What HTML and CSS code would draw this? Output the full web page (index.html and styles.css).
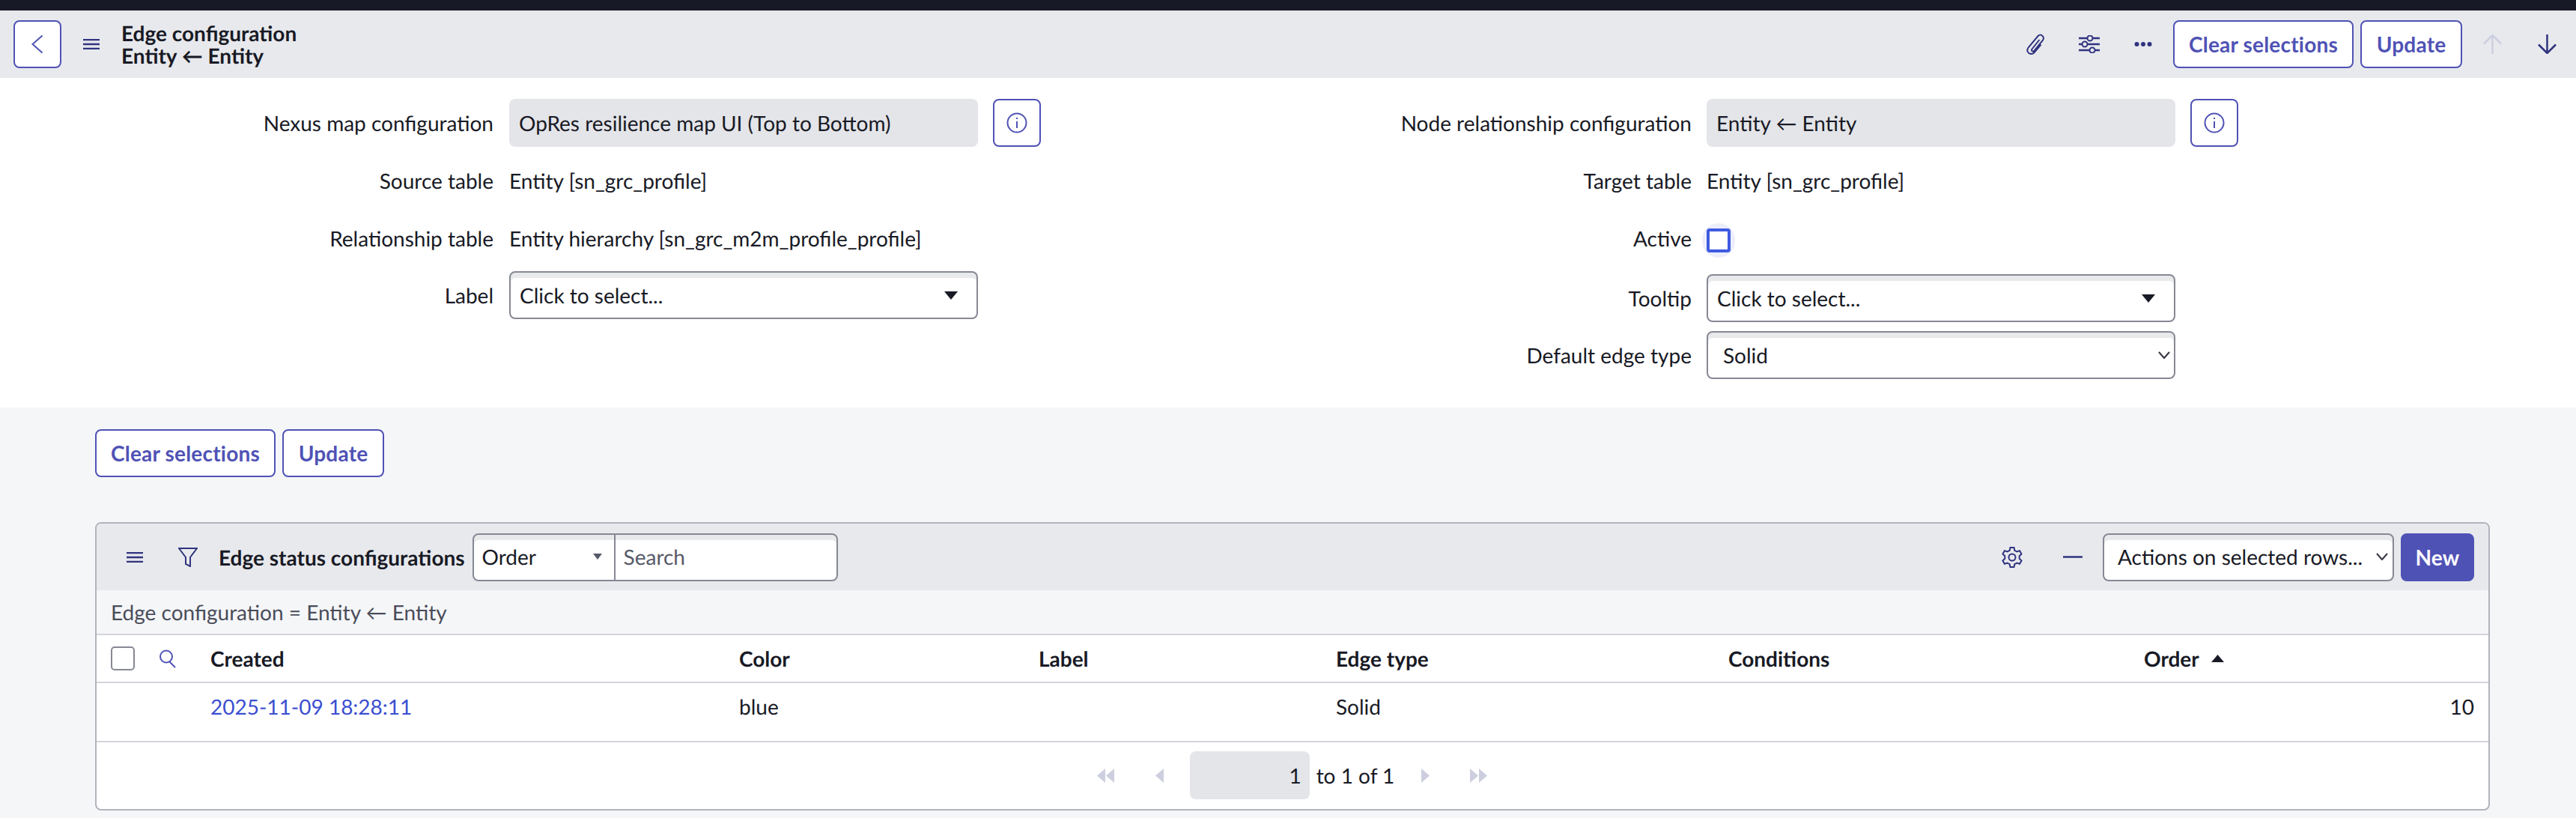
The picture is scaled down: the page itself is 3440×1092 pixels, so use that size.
FILE: index.html
```html
<!DOCTYPE html>
<html lang="en">
<head>
    <meta charset="UTF-8">
    <meta name="viewport" content="width=device-width, initial-scale=1.0">
    <title>Edge configuration</title>
    <link rel="stylesheet" href="styles.css">
</head>
<body>
    <div class="top-bar"></div>

    <header class="form-header">
        <button class="btn btn-back" aria-label="Back">
            <svg width="16" height="26" viewBox="0 0 16 26"><path d="M14.500 1.500 L1.500 13 L14.500 24.500" class="line-primary"/></svg>
        </button>
        <svg class="menu-icon" width="22" height="14" viewBox="0 0 22 14"><path d="M0 1H22M0 7H22M0 13H22" class="line-navy"/></svg>
        <div class="form-title">
            <div>Edge configuration</div>
            <div>Entity ← Entity</div>
        </div>
        <div class="header-actions">
            <svg class="icon-clip" width="26" height="28" viewBox="0 0 26 28"><path d="M18.500 8 L8.500 20.500 C6.800 23 9.800 24.800 11.800 22.500 L22.800 9 C26 4.500 20.800 -0.800 16.800 2.800 L4 18 C-0.800 24.500 6.500 29.500 11.500 25.200 L20.500 14.500" class="line-navy thin"/></svg>
            <svg class="icon-sliders" width="28" height="24" viewBox="0 0 28 24"><path d="M0 4H11M19 4H28M0 12H4M12 12H28M0 20H14M22 20H28" class="line-navy"/><circle cx="15" cy="4" r="3.500" class="line-navy thin"/><circle cx="8" cy="12" r="3.500" class="line-navy thin"/><circle cx="18" cy="20" r="3.500" class="line-navy thin"/></svg>
            <svg class="icon-dots" width="24" height="8" viewBox="0 0 24 8"><circle cx="3.500" cy="4" r="3" class="fill-navy"/><circle cx="12" cy="4" r="3" class="fill-navy"/><circle cx="20.500" cy="4" r="3" class="fill-navy"/></svg>
            <button class="btn btn-clear">Clear selections</button>
            <button class="btn btn-update">Update</button>
            <svg class="icon-up" width="25" height="26" viewBox="0 0 25 26"><path d="M12.500 26V1M1 12.500L12.500 1L24 12.500" class="line-muted"/></svg>
            <svg class="icon-down" width="25" height="26" viewBox="0 0 25 26"><path d="M12.500 0V25M1 13.500L12.500 25L24 13.500" class="line-navy"/></svg>
        </div>
    </header>

    <section class="form-body">
        <div class="form-col">
            <div class="form-row">
                <label class="field-label">Nexus map configuration</label>
                <div class="readonly-field">OpRes resilience map UI (Top to Bottom)</div>
                <button class="btn btn-info" aria-label="Info">
                    <svg width="28" height="28" viewBox="0 0 28 28"><circle cx="14" cy="14" r="12.500" class="line-primary"/><path d="M14 12V21M14 7V9" class="line-primary"/></svg>
                </button>
            </div>
            <div class="form-row row-text">
                <label class="field-label">Source table</label>
                <div class="field-value">Entity [sn_grc_profile]</div>
            </div>
            <div class="form-row row-text row-third">
                <label class="field-label">Relationship table</label>
                <div class="field-value">Entity hierarchy [sn_grc_m2m_profile_profile]</div>
            </div>
            <div class="form-row row-select-left">
                <label class="field-label">Label</label>
                <div class="select-field">
                    <span>Click to select...</span>
                    <svg width="18" height="11" viewBox="0 0 18 11"><path d="M0 0H18L9 11Z" class="fill-dark"/></svg>
                </div>
            </div>
        </div>
        <div class="form-col">
            <div class="form-row">
                <label class="field-label">Node relationship configuration</label>
                <div class="readonly-field">Entity ← Entity</div>
                <button class="btn btn-info" aria-label="Info">
                    <svg width="28" height="28" viewBox="0 0 28 28"><circle cx="14" cy="14" r="12.500" class="line-primary"/><path d="M14 12V21M14 7V9" class="line-primary"/></svg>
                </button>
            </div>
            <div class="form-row row-text">
                <label class="field-label">Target table</label>
                <div class="field-value">Entity [sn_grc_profile]</div>
            </div>
            <div class="form-row row-text row-third">
                <label class="field-label">Active</label>
                <div class="checkbox-halo"><div class="checkbox-focus"></div></div>
            </div>
            <div class="form-row row-select-right">
                <label class="field-label">Tooltip</label>
                <div class="select-field">
                    <span>Click to select...</span>
                    <svg width="18" height="11" viewBox="0 0 18 11"><path d="M0 0H18L9 11Z" class="fill-dark"/></svg>
                </div>
            </div>
            <div class="form-row row-select-last">
                <label class="field-label">Default edge type</label>
                <div class="select-field native">
                    <span>Solid</span>
                    <svg width="16" height="10" viewBox="0 0 16 10"><path d="M1 1L8 9L15 1" class="line-dark"/></svg>
                </div>
            </div>
        </div>
    </section>

    <main class="related">
        <div class="bottom-buttons">
            <button class="btn btn-clear">Clear selections</button>
            <button class="btn btn-update">Update</button>
        </div>

        <div class="list-panel">
            <div class="list-toolbar">
                <svg class="list-menu" width="22" height="14" viewBox="0 0 22 14"><path d="M0 1H22M0 7H22M0 13H22" class="line-navy"/></svg>
                <svg class="list-filter" width="26" height="26" viewBox="0 0 26 26"><path d="M1 1H25L16 13V25L10 22V13Z" class="line-navy thin"/></svg>
                <div class="list-title">Edge status configurations</div>
                <div class="search-group">
                    <div class="search-select">
                        <span>Order</span>
                        <svg width="12" height="8" viewBox="0 0 12 8"><path d="M0 0H12L6 8Z" class="fill-slate"/></svg>
                    </div>
                    <div class="search-input">Search</div>
                </div>
                <div class="toolbar-right">
                    <svg class="icon-gear" width="30" height="30" viewBox="0 0 30 30"><path d="M12.500 2H17.500L18.300 5.800L21.400 7.500L25.100 6.300L27.500 10.600L24.700 13.200V16.800L27.500 19.400L25.100 23.700L21.400 22.500L18.300 24.200L17.500 28H12.500L11.700 24.200L8.600 22.500L4.900 23.700L2.500 19.400L5.300 16.800V13.200L2.500 10.600L4.900 6.300L8.600 7.500L11.700 5.800Z" class="line-navy thin"/><circle cx="15" cy="15" r="4.500" class="line-navy thin"/></svg>
                    <svg class="icon-minus" width="26" height="3" viewBox="0 0 26 3"><path d="M0 1.500H26" class="line-navy"/></svg>
                    <div class="actions-select">
                        <span>Actions on selected rows...</span>
                        <svg width="16" height="10" viewBox="0 0 16 10"><path d="M1 1L8 9L15 1" class="line-dark"/></svg>
                    </div>
                    <button class="btn btn-new">New</button>
                </div>
            </div>

            <div class="breadcrumb">Edge configuration = Entity ← Entity</div>

            <div class="table-row table-head">
                <div class="select-cell">
                    <div class="row-checkbox"></div>
                    <svg width="25" height="25" viewBox="0 0 25 25"><circle cx="10" cy="9.500" r="8" class="line-primary"/><path d="M14.500 16.500L22 24" class="line-primary"/></svg>
                </div>
                <div>Created</div>
                <div>Color</div>
                <div>Label</div>
                <div>Edge type</div>
                <div>Conditions</div>
                <div class="order-head">Order <svg width="17" height="10" viewBox="0 0 17 10"><path d="M8.500 0L17 10H0Z" class="fill-dark"/></svg></div>
            </div>

            <div class="table-row table-data">
                <div></div>
                <div><a class="record-link" href="#">2025-11-09 18:28:11</a></div>
                <div>blue</div>
                <div></div>
                <div>Solid</div>
                <div></div>
                <div class="cell-number">10</div>
            </div>

            <div class="pager">
                <svg class="pg-first" width="23" height="19" viewBox="0 0 23 19"><path d="M11 0V19L0 9.500ZM23 0V19L12 9.500Z" class="fill-muted"/></svg>
                <svg class="pg-prev" width="11" height="19" viewBox="0 0 11 19"><path d="M11 0V19L0 9.500Z" class="fill-muted"/></svg>
                <div class="page-input">1</div>
                <div class="page-count">to 1 of 1</div>
                <svg class="pg-next" width="11" height="19" viewBox="0 0 11 19"><path d="M0 0V19L11 9.500Z" class="fill-muted"/></svg>
                <svg class="pg-last" width="24" height="19" viewBox="0 0 24 19"><path d="M0 0V19L11 9.500ZM12 0V19L23 9.500Z" class="fill-muted"/></svg>
            </div>
        </div>
    </main>
</body>
</html>
```

FILE: styles.css
```css
:root {
    --primary-color: #4f52b5;
    --navy: #30337f;
    --text-color: #181a25;
    --muted: #cdcedf;
    --header-bg: #e8e9ed;
    --page-bg: #f5f6f8;
    --field-bg: #e4e5e9;
    --border-color: #868894;
    --line-color: #d4d5dc;
    --panel-border: #b2b4bc;
}

* {
    box-sizing: border-box;
    margin: 0;
    padding: 0;
}

body {
    background-color: var(--page-bg);
    color: var(--text-color);
    font-family: Lato, "Liberation Sans", sans-serif;
    font-size: 28px;
    line-height: 30px;
    text-rendering: geometricPrecision;
    overflow: hidden;
}

svg {
    display: block;
    flex: none;
}

/* svg helpers */
.line-primary, .line-navy, .line-muted, .line-dark {
    fill: none;
    stroke-width: 2.5;
}

.line-primary { stroke: var(--primary-color); stroke-width: 2; }
.line-navy { stroke: var(--navy); }
.line-muted { stroke: var(--muted); }
.line-dark { stroke: #33343f; stroke-width: 2; }
.thin { stroke-width: 2; }
.fill-navy { fill: var(--navy); }
.fill-dark { fill: var(--text-color); }
.fill-slate { fill: #565968; }
.fill-muted { fill: var(--muted); }

.top-bar {
    height: 14px;
    background-color: #181926;
}

/* buttons */
.btn {
    height: 64px;
    font-family: inherit;
    font-size: 28px;
    font-weight: 700;
    letter-spacing: 0.2px;
    color: var(--primary-color);
    background: #fff;
    border: 2.5px solid var(--primary-color);
    border-radius: 8px;
    display: flex;
    align-items: center;
    justify-content: center;
    flex: none;
}

.btn-clear { width: 241px; }
.btn-update { width: 136px; }

.btn-back {
    width: 64px;
    margin-left: 18px;
}

.btn-info {
    width: 64px;
    margin-left: 20px;
}

.btn-new {
    width: 98px;
    color: #fff;
    background: var(--primary-color);
}

/* form header */
.form-header {
    height: 90px;
    display: flex;
    align-items: center;
    background-color: var(--header-bg);
}

.menu-icon {
    margin-left: 29px;
    margin-right: 29px;
}

.form-title {
    font-weight: 700;
}

.header-actions {
    display: flex;
    align-items: center;
    margin-left: auto;
    margin-right: 26px;
}

.icon-sliders { margin-left: 45px; }
.icon-dots { margin-left: 46px; margin-right: 28px; }
.header-actions .btn-update { margin-left: 9px; }
.icon-up { margin-left: 28px; }
.icon-down { margin-left: 48px; }

/* form */
.form-body {
    height: 440px;
    padding-top: 28px;
    background: #fff;
    display: grid;
    grid-template-columns: 1600px 1fr;
}

.form-row {
    display: flex;
    align-items: center;
    height: 64px;
}

.row-text { margin-top: 15px; padding-bottom: 5px; }
.row-third { margin-top: 13px; }
.row-select-left { margin-top: 10px; }
.row-select-right { margin-top: 14px; }
.row-select-last { margin-top: 12px; }

.field-label {
    width: 659px;
    margin-right: 20px;
    text-align: right;
}

.form-col:first-child .field-label {
    margin-right: 21px;
}

.readonly-field {
    width: 626px;
    height: 64px;
    padding: 0 13px;
    display: flex;
    align-items: center;
    border-radius: 8px;
    background-color: var(--field-bg);
}

.select-field {
    width: 626px;
    height: 64px;
    padding: 0 25px 0 12px;
    display: flex;
    align-items: center;
    justify-content: space-between;
    background: #fff;
    border: 2.5px solid var(--border-color);
    border-radius: 8px;
    box-shadow: inset 0 7px 0 #e8e9ea;
}

.select-field.native {
    padding: 0 5px 0 20px;
}

.checkbox-halo {
    width: 44px;
    height: 46px;
    margin: 7px 0 0 -6px;
    padding: 7px 6px;
    border-radius: 22px;
    background-color: #eceefb;
}

.checkbox-focus {
    width: 32px;
    height: 32px;
    background: #fff;
    border: 4px solid #3f5be0;
    border-radius: 4px;
}

/* related list */
.related {
    padding: 29px 115px 0 127px;
}

.bottom-buttons {
    display: flex;
    gap: 9px;
}

.list-panel {
    height: 385px;
    margin-top: 60px;
    border: 2.5px solid var(--panel-border);
    border-radius: 8px;
    background: #fff;
    overflow: hidden;
}

.list-toolbar {
    height: 89px;
    display: flex;
    align-items: center;
    background-color: var(--header-bg);
}

.list-menu { margin-left: 40px; }
.list-filter { margin-left: 47px; }

.list-title {
    margin-left: 28px;
    font-weight: 700;
    white-space: nowrap;
}

.search-group {
    width: 488px;
    height: 64px;
    margin-left: 10px;
    display: flex;
    background: #fff;
    border: 2.5px solid var(--border-color);
    border-radius: 8px;
    box-shadow: inset 0 7px 0 #e8e9ea;
}

.search-select {
    width: 189px;
    padding: 0 16px 2px 11px;
    display: flex;
    align-items: center;
    justify-content: space-between;
    border-right: 2px solid var(--border-color);
}

.search-input {
    padding: 0 0 2px 11px;
    display: flex;
    align-items: center;
    color: #565968;
}

.toolbar-right {
    display: flex;
    align-items: center;
    margin-left: auto;
    margin-right: 19px;
}

.icon-minus { margin-left: 53px; margin-right: 27px; }

.actions-select {
    width: 389px;
    height: 64px;
    padding: 0 6px 2px 18px;
    margin-right: 9px;
    display: flex;
    align-items: center;
    justify-content: space-between;
    white-space: nowrap;
    background: #fff;
    border: 2.5px solid var(--border-color);
    border-radius: 8px;
    box-shadow: inset 0 7px 0 #e8e9ea;
}

.breadcrumb {
    height: 60px;
    padding-left: 19px;
    display: flex;
    align-items: center;
    color: #4a4d5a;
    background-color: var(--page-bg);
    border-bottom: 2px solid var(--line-color);
}

.table-row {
    display: grid;
    grid-template-columns: 152px 706px 400px 397px 524px 555px 1fr;
    align-items: center;
}

.table-head {
    height: 64px;
    font-weight: 700;
    border-bottom: 2px solid var(--line-color);
}

.select-cell {
    display: flex;
    align-items: center;
    padding-left: 19px;
    gap: 32px;
}

.row-checkbox {
    width: 32px;
    height: 32px;
    background: #fff;
    border: 2.5px solid var(--border-color);
    border-radius: 5px;
}

.order-head {
    display: flex;
    align-items: center;
    gap: 16px;
}

.table-data {
    height: 79px;
    padding-bottom: 15px;
    border-bottom: 2px solid var(--line-color);
}

.record-link {
    color: #3b4fd0;
    text-decoration: none;
}

.cell-number {
    text-align: right;
    padding-right: 19px;
}

.pager {
    height: 88px;
    display: flex;
    align-items: center;
    justify-content: center;
}

.pg-prev { margin-left: 55px; }

.page-input {
    width: 160px;
    height: 64px;
    margin-left: 35px;
    padding-right: 11px;
    display: flex;
    align-items: center;
    justify-content: flex-end;
    border-radius: 8px;
    background-color: var(--field-bg);
}

.page-count { margin-left: 9px; }
.pg-next { margin-left: 36px; }
.pg-last { margin-left: 54px; }
```
